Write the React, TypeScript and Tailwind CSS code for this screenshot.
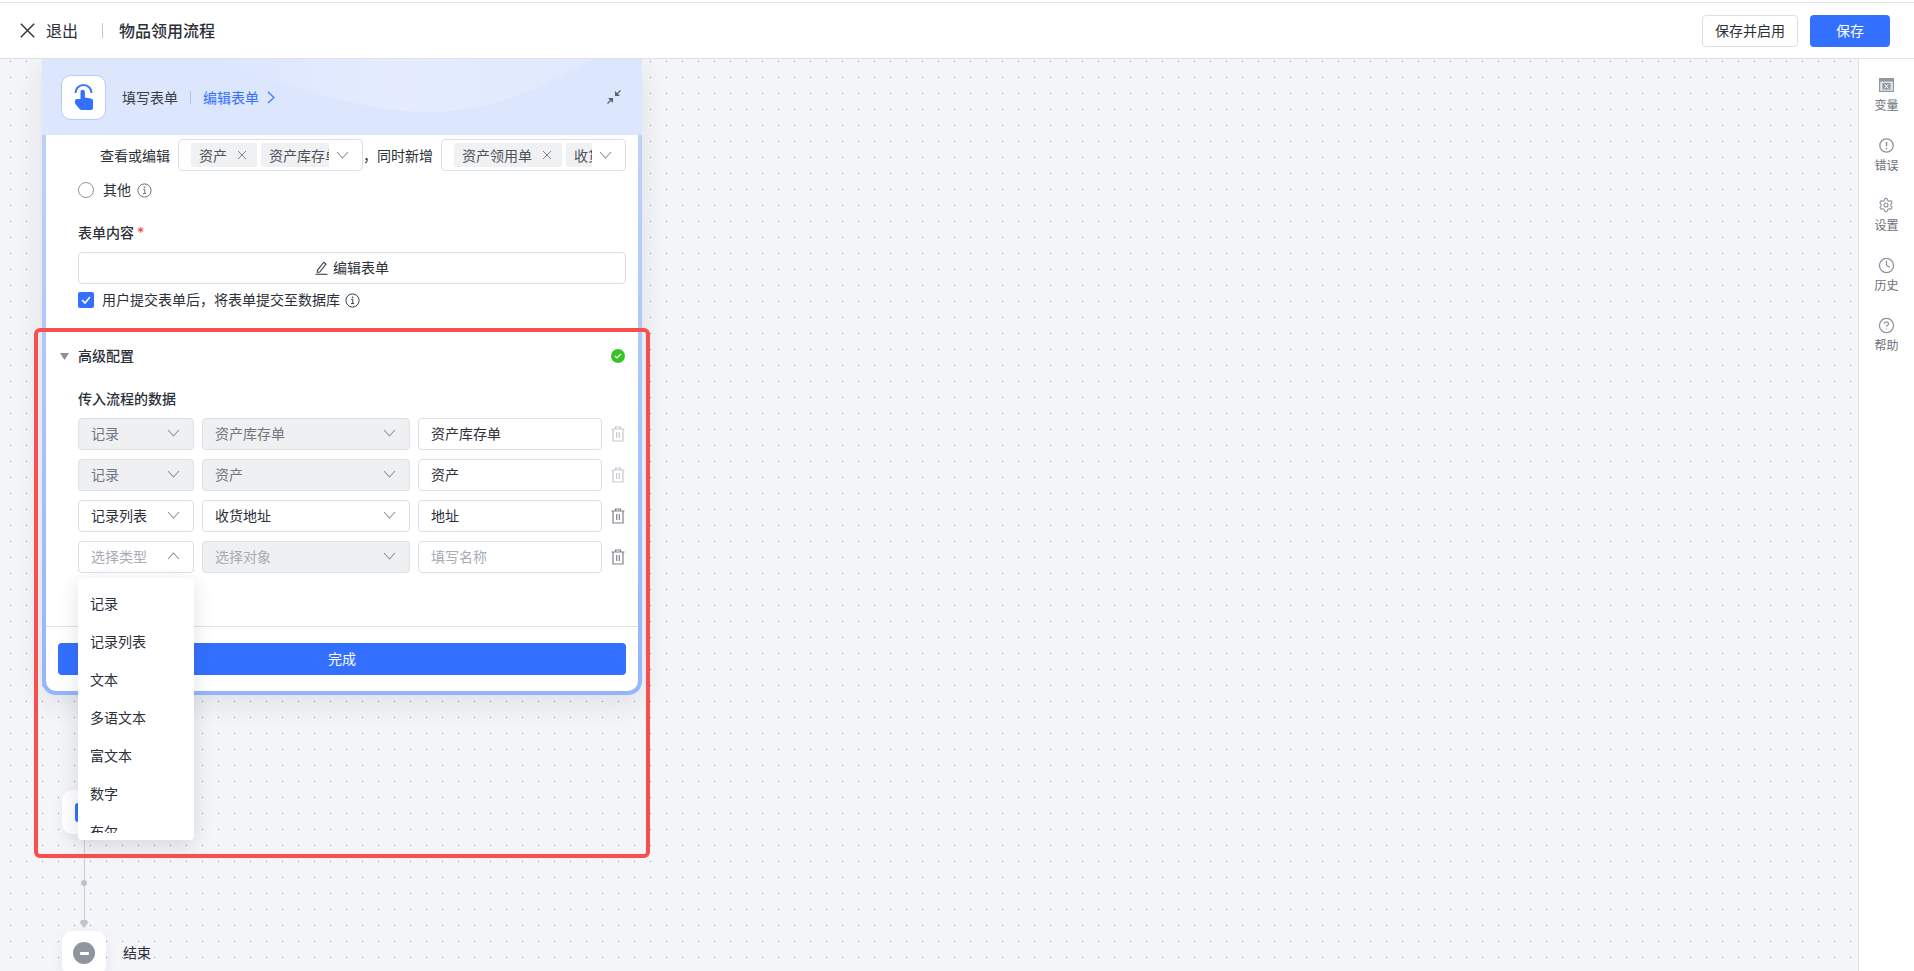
import React from 'react';
import { Settings, CircleHelp, Clock } from 'lucide-react';

const FONT = "font-['Inter','Noto_Sans_CJK_SC',sans-serif]";

const Chevron = ({ up = false }: { up?: boolean }) => (
  <svg width="13" height="8" viewBox="0 0 13 8" fill="none" className="shrink-0 text-[#8b919b]">
    <path d={up ? 'M1 7l5.5-6L12 7' : 'M1 1l5.5 6L12 1'} stroke="currentColor" strokeWidth="1.1" />
  </svg>
);

const SmallX = () => (
  <svg width="10" height="10" viewBox="0 0 10 10" fill="none" className="shrink-0">
    <path d="M1 1l8 8M9 1L1 9" stroke="#7d838d" strokeWidth="1" />
  </svg>
);

const InfoIcon = ({ color }: { color: string }) => (
  <svg width="15" height="15" viewBox="0 0 15 15" fill="none" className="shrink-0">
    <circle cx="7.5" cy="7.5" r="6.6" stroke={color} strokeWidth="1" />
    <circle cx="7.5" cy="4.4" r="0.8" fill={color} />
    <path d="M6.3 6.5h1.5v4M6 10.6h3.2" stroke={color} strokeWidth="1" />
  </svg>
);

const TrashIcon = ({ color }: { color: string }) => (
  <svg width="14" height="16" viewBox="0 0 14 16" fill="none" className="ml-[1px] shrink-0">
    <path d="M0.5 3h13M4.5 3V1h5v2M2 3v12h10V3M5.7 6v6M8.3 6v6" stroke={color} strokeWidth="1.2" />
  </svg>
);

const Tag = ({ text, closable = true }: { text: string; closable?: boolean }) => (
  <span className="flex h-6 shrink-0 items-center rounded-[2px] bg-[#f0f1f3] pl-2 pr-2.5 text-[14px] text-[#4b5159]">
    <span className="whitespace-nowrap">{text}</span>
    {closable && <span className="ml-2.5"><SmallX /></span>}
  </span>
);

const TagSelect = ({ tags, width }: { tags: React.ReactNode; width: string }) => (
  <div className={`flex h-8 items-center rounded-[4px] border border-[#dcdfe4] bg-white pl-3 pr-[13px] ${width}`}>
    <div className="flex min-w-0 flex-1 gap-1 overflow-hidden">{tags}</div>
    <span className="ml-[7px]"><Chevron /></span>
  </div>
);

const Select = ({
  text,
  width,
  disabled = false,
  placeholder = false,
  up = false,
}: {
  text: string;
  width: string;
  disabled?: boolean;
  placeholder?: boolean;
  up?: boolean;
}) => (
  <div
    className={`flex h-8 items-center justify-between rounded-[4px] border border-[#dcdfe4] pb-[2px] pl-3 pr-[13px] text-[14px] ${width} ${
      disabled ? 'bg-[#eff0f2]' : 'bg-white'
    } ${placeholder ? 'text-[#a8adb5]' : disabled ? 'text-[#71767f]' : 'text-[#2c3038]'}`}
  >
    <span>{text}</span>
    <Chevron up={up} />
  </div>
);

const rows = [
  { type: '记录', obj: '资产库存单', name: '资产库存单', locked: true },
  { type: '记录', obj: '资产', name: '资产', locked: true },
  { type: '记录列表', obj: '收货地址', name: '地址', locked: false },
];

const options = ['记录', '记录列表', '文本', '多语文本', '富文本', '数字', '布尔'];

const sideItems: { label: string; icon: React.ReactNode }[] = [
  {
    label: '变量',
    icon: (
      <svg width="15" height="14" viewBox="0 0 15 14" fill="none">
        <path d="M0 0h15v14H0z" fill="#9298a3" />
        <path d="M1.2 3.6h12.6v9.2H1.2z" fill="#e6e7ea" />
        <path d="M3.4 5h8.2v6.6H3.4z" fill="#9298a3" />
        <path d="M5.6 6.2l3.8 4.2M9.4 6.2l-3.8 4.2" stroke="#fff" strokeWidth="1" />
      </svg>
    ),
  },
  {
    label: '错误',
    icon: (
      <svg width="15" height="15" viewBox="0 0 15 15" fill="none">
        <circle cx="7.5" cy="7.5" r="6.7" stroke="#8e939d" strokeWidth="1.3" />
        <path d="M7.5 3.8v4.6" stroke="#8e939d" strokeWidth="1.5" />
        <circle cx="7.5" cy="10.6" r="0.9" fill="#8e939d" />
      </svg>
    ),
  },
  { label: '设置', icon: <Settings size={16} strokeWidth={1.7} color="#8e939d" /> },
  { label: '历史', icon: <Clock size={17} strokeWidth={1.8} color="#8e939d" /> },
  { label: '帮助', icon: <CircleHelp size={17} strokeWidth={1.8} color="#8e939d" /> },
];

export default function App() {
  return (
    <div className={`flex h-screen w-full flex-col overflow-hidden bg-white text-[14px] text-[#2c3038] ${FONT}`}>
      <header className="mt-[2px] flex h-[57px] shrink-0 items-center border-y border-[#dfe1e5] bg-white pl-5 pr-6">
        <svg width="15" height="15" viewBox="0 0 15 15" fill="none">
          <path d="M0.8 0.8l13.4 13.4M14.2 0.8L0.8 14.2" stroke="#2c3038" strokeWidth="1.4" />
        </svg>
        <span className="ml-[11px] text-[16px]">退出</span>
        <span className="ml-6 h-[15px] w-px bg-[#c4c7cd]" />
        <span className="ml-4 text-[16px] font-medium">物品领用流程</span>
        <button className="ml-auto h-8 w-24 rounded-[4px] border border-[#dcdfe4] bg-white text-[14px] text-[#2c3038]">保存并启用</button>
        <button className="ml-3 h-8 w-20 rounded-[4px] bg-[#3370ff] text-[14px] text-white">保存</button>
      </header>

      <div className="flex min-h-0 flex-1">
        <main className="relative min-w-0 flex-1 overflow-hidden bg-[#f4f5f8] bg-[radial-gradient(circle_at_8.5px_8.5px,#8a8f98_0.5px,transparent_0.8px)] bg-[length:16px_16px] bg-[position:2px_-6px]">
          {/* 节点: 被下拉层挡住的那个 */}
          <div className="absolute left-[62px] top-[731px] flex h-[44px] w-[44px] items-center rounded-[10px] bg-white pl-[13px] shadow-[0_4px_14px_rgba(0,0,0,0.06)]">
            <span className="h-[19px] w-[20px] rounded-[3px] bg-[#3370ff]" />
          </div>

          {/* 连线 */}
          <div className="absolute left-[83.5px] top-[775px] h-[93px] w-px bg-[#c9ccd2]" />
          <div className="absolute left-[81px] top-[821px] h-[6px] w-[6px] rounded-full bg-[#bfc3c9]" />
          <svg width="8" height="8" viewBox="0 0 8 8" className="absolute left-[80px] top-[861px]">
            <path d="M1 0h6l1 3-4 5-4-5z" fill="#c2c5cb" />
          </svg>

          {/* 结束 */}
          <div className="absolute left-[62px] top-[872px] flex items-center">
            <div className="flex h-[44px] w-[44px] items-center justify-center rounded-[10px] bg-white shadow-[0_4px_14px_rgba(0,0,0,0.06)]">
              <span className="flex h-[22px] w-[22px] items-center justify-center rounded-full bg-[#8f949f]">
                <span className="h-[3px] w-[9px] rounded-[1px] bg-white" />
              </span>
            </div>
            <span className="ml-[17px] -translate-y-px text-[14px]">结束</span>
          </div>

          {/* 当前展开的节点卡片 */}
          <div className="absolute left-[42px] top-0 w-[600px] rounded-b-[14px] bg-gradient-to-b from-[#c3d5fb] to-[#94b4ff] shadow-[0_8px_28px_rgba(30,40,70,0.1)]">
            <div className="relative flex h-[76px] items-center overflow-hidden bg-[#dce6fd] pl-[19px] pr-[21px]">
              <svg width="600" height="76" viewBox="0 0 600 76" fill="none" className="absolute left-0 top-0">
                <defs>
                  <linearGradient id="wave" x1="0" y1="0" x2="1" y2="0">
                    <stop offset="0" stopColor="#e4ecfe" stopOpacity="0" />
                    <stop offset="0.45" stopColor="#e4ecfe" />
                    <stop offset="1" stopColor="#e1e9fe" />
                  </linearGradient>
                </defs>
                <path d="M180 0v4C260 34 340 54 392 53 450 51 500 30 552 0z" fill="url(#wave)" />
              </svg>
              <div className="relative flex h-[45px] w-[45px] items-center justify-center rounded-[10px] border border-[#b6cbfb] bg-white">
                <svg width="20" height="28" viewBox="0 0 20 28" fill="none">
                  <path d="M1.5 10a8 8 0 0 1 16 0" stroke="#3f7afc" strokeWidth="2.2" fill="none" />
                  <path d="M6.5 9a2.2 2.2 0 0 1 4.4 0v5.4l6 1a2.4 2.4 0 0 1 2.1 2.4V25a2 2 0 0 1-2 2H7.5a2 2 0 0 1-1.6-.8L1.4 21A2.4 2.4 0 0 1 1 19.6V18a2 2 0 0 1 2-2h3.500z" fill="#3370ff" />
                </svg>
              </div>
              <span className="relative ml-[16px] text-[14px] text-[#3a3f47]">填写表单</span>
              <span className="relative ml-3 h-[13px] w-px bg-[#bcc3d0]" />
              <span className="relative ml-3 text-[14px] text-[#3370ff]">编辑表单</span>
              <svg width="8" height="13" viewBox="0 0 8 13" fill="none" className="relative ml-2">
                <path d="M1 1l6 5.5L1 12" stroke="#3370ff" strokeWidth="1.1" />
              </svg>
              <svg width="14" height="14" viewBox="0 0 14 14" fill="none" className="relative ml-auto">
                <path d="M13.500 0.500L10 4" stroke="#5b6270" strokeWidth="1.3" />
                <path d="M8 1v5h5z" fill="#5b6270" />
                <path d="M0.500 13.500L4 10" stroke="#5b6270" strokeWidth="1.3" />
                <path d="M6 13V8H1z" fill="#5b6270" />
              </svg>
            </div>

            <div className="px-1 pb-1">
              <div className="rounded-b-[10px] bg-white pt-1">
                {/* 查看或编辑 */}
                <div className="flex items-center pl-[54px]">
                  <span className="w-[78px]">查看或编辑</span>
                  <TagSelect
                    width="w-[185px]"
                    tags={
                      <>
                        <Tag text="资产" />
                        <Tag text="资产库存单" closable={false} />
                      </>
                    }
                  />
                  <span className="w-[78px] whitespace-nowrap">，同时新增</span>
                  <TagSelect
                    width="w-[185px]"
                    tags={
                      <>
                        <Tag text="资产领用单" />
                        <Tag text="收货地址" closable={false} />
                      </>
                    }
                  />
                </div>

                <div className="mt-2 flex h-[22px] items-center pl-8">
                  <span className="h-4 w-4 rounded-full border border-[#8f949f] bg-white" />
                  <span className="ml-[9px] -translate-y-px">其他</span>
                  <span className="ml-[6px]"><InfoIcon color="#6f7580" /></span>
                </div>

                <div className="mt-[21px] flex h-[22px] -translate-y-px items-center pl-8 font-medium">
                  表单内容<span className="ml-[3px] text-[#f54a45]">*</span>
                </div>

                <div className="ml-8 mr-3 mt-2 flex h-8 items-center justify-center rounded-[4px] border border-[#dcdfe4] bg-white">
                  <svg width="13" height="14" viewBox="0 0 13 14" fill="none" className="shrink-0">
                    <path d="M2.500 9.200L8.800 1.200 11 3 4.800 11 2.300 11.300z" stroke="#3a3f47" strokeWidth="1.1" />
                    <path d="M0.500 13.300h12" stroke="#3a3f47" strokeWidth="1.1" />
                  </svg>
                  <span className="ml-[5px] -translate-y-px">编辑表单</span>
                </div>

                <div className="mt-[5px] flex h-[22px] items-center pl-8">
                  <span className="flex h-4 w-4 items-center justify-center rounded-[2px] bg-[#3370ff]">
                    <svg width="10" height="8" viewBox="0 0 10 8" fill="none">
                      <path d="M1 4l3 3 5-6" stroke="#fff" strokeWidth="1.6" />
                    </svg>
                  </span>
                  <span className="ml-2 -translate-y-px">用户提交表单后，将表单提交至数据库</span>
                  <span className="ml-[5px]"><InfoIcon color="#3a3f47" /></span>
                </div>

                {/* 高级配置 */}
                <div className="mt-[34px] flex h-[22px] items-center pl-[14px] pr-[13px]">
                  <svg width="9" height="7" viewBox="0 0 9 7" className="shrink-0">
                    <path d="M0 0h9L4.5 7z" fill="#8b919b" />
                  </svg>
                  <span className="ml-[9px] -translate-y-px font-medium">高级配置</span>
                  <span className="ml-auto flex h-[14px] w-[14px] items-center justify-center rounded-full bg-[#35c424]">
                    <svg width="8" height="6" viewBox="0 0 8 6" fill="none">
                      <path d="M1 3l2 2 4-4" stroke="#fff" strokeWidth="1.2" />
                    </svg>
                  </span>
                </div>

                <div className="mt-[21px] h-[22px] pl-8 font-medium leading-[22px]">传入流程的数据</div>

                <div className="mt-2 flex flex-col gap-[9px] pl-8">
                  {rows.map((r) => (
                    <div key={r.obj} className="flex items-center gap-2">
                      <Select text={r.type} width="w-[116px]" disabled={r.locked} />
                      <Select text={r.obj} width="w-[208px]" disabled={r.locked} />
                      <div className="flex h-8 w-[184px] items-center rounded-[4px] border border-[#dcdfe4] bg-white pb-[2px] pl-3 text-[#2c3038]">{r.name}</div>
                      <TrashIcon color={r.locked ? '#c6c9cf' : '#7d838d'} />
                    </div>
                  ))}
                  <div className="flex items-center gap-2">
                    <Select text="选择类型" width="w-[116px]" placeholder up />
                    <Select text="选择对象" width="w-[208px]" placeholder disabled />
                    <div className="flex h-8 w-[184px] items-center rounded-[4px] border border-[#dcdfe4] bg-white pb-[2px] pl-3 text-[#a8adb5]">填写名称</div>
                    <TrashIcon color="#7d838d" />
                  </div>
                </div>

                <div className="mt-[53px] border-t border-[#dfe1e5] px-3 py-4">
                  <button className="h-8 w-full rounded-[4px] bg-[#3370ff] pb-[2px] text-[14px] text-white">完成</button>
                </div>
              </div>
            </div>
          </div>

          {/* 下拉层 */}
          <div className="absolute left-[78px] top-[519px] h-[262px] w-[116px] overflow-hidden rounded-[4px] bg-white shadow-[0_6px_20px_rgba(30,40,70,0.14)]">
            <div className="h-[255px] overflow-hidden pl-3 pt-[6px]">
              {options.map((o) => (
                <div key={o} className="flex h-[38px] items-center text-[14px] text-[#2c3038]">{o}</div>
              ))}
            </div>
          </div>

          {/* 红框标注 */}
          <div className="pointer-events-none absolute left-[34px] top-[269px] h-[530px] w-[616px] rounded-[6px] border-4 border-[#f84e4e]" />
        </main>

        <aside className="flex w-[56px] shrink-0 flex-col items-center border-l border-[#dfe1e5] bg-white pt-[17px]">
          {sideItems.map((s) => (
            <div key={s.label} className="flex h-[60px] flex-col items-center">
              <div className="flex h-[18px] items-center">{s.icon}</div>
              <span className="mt-[2px] text-[12px] leading-[20px] text-[#6b7079]">{s.label}</span>
            </div>
          ))}
        </aside>
      </div>
    </div>
  );
}
